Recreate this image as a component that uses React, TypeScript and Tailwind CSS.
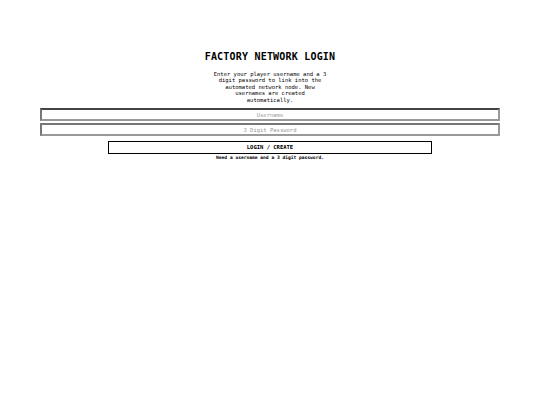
export default function App() {
  return (
    <div
      className="min-h-[405px] w-[540px] bg-white text-black"
      style={{ fontFamily: '"DejaVu Sans Mono", monospace' }}
    >
      <div className="mx-auto flex w-[460px] flex-col items-center pt-[51px]">
        <h1 className="text-[10px] font-bold leading-[12px] tracking-[0.2px]">FACTORY NETWORK LOGIN</h1>
        <p className="mt-[8px] w-[118px] text-center text-[5.5px] leading-[6.4px]">
          Enter your player username and a 3 digit password to link into the automated network node. New
          usernames are created automatically.
        </p>
        <input
          className="mt-[5px] h-[13px] w-full border-2 border-t-[#444] border-l-[#777] border-r-[#999] border-b-[#999] bg-white text-center text-[5.5px] outline-none placeholder:text-[#999]"
          placeholder="Username"
        />
        <input
          className="mt-[2px] h-[13px] w-full border-2 border-t-[#777] border-l-[#777] border-r-[#999] border-b-[#999] bg-white text-center text-[5.5px] outline-none placeholder:text-[#999]"
          placeholder="3 Digit Password"
        />
        <button className="mt-[5px] h-[13px] w-[324px] border border-black text-[5.5px] font-bold leading-none">
          LOGIN / CREATE
        </button>
        <p className="mt-[1px] text-[4.6px] font-bold leading-[6px]">Need a username and a 3 digit password.</p>
      </div>
    </div>
  );
}
